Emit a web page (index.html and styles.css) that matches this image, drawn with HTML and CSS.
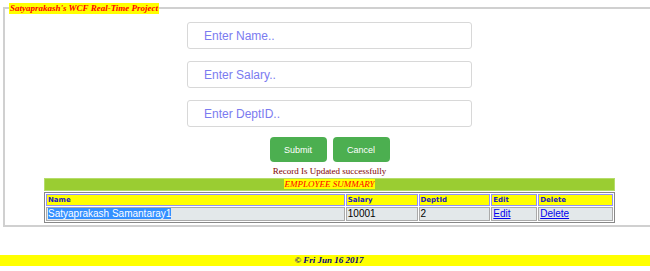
FILE: index.html
```html
<!DOCTYPE html>
<html>
<head>
<meta charset="utf-8">
<link rel="stylesheet" href="styles.css">
</head>
<body>
<div class="page">
  <fieldset class="box">
    <legend class="legend">Satyaprakash's WCF Real-Time Project</legend>
    <div class="form">
      <input class="field" type="text" placeholder="Enter Name..">
      <input class="field" type="text" placeholder="Enter Salary..">
      <input class="field" type="text" placeholder="Enter DeptID..">
      <div class="buttons">
        <button class="btn">Submit</button>
        <button class="btn">Cancel</button>
      </div>
      <div class="msg">Record Is Updated successfully</div>
    </div>
    <div class="summary">
      <div class="summary-title"><span>EMPLOYEE SUMMARY</span></div>
      <table class="grid">
        <tr class="head">
          <th class="c-name">Name</th>
          <th class="c-sal">Salary</th>
          <th class="c-dept">DeptId</th>
          <th class="c-edit">Edit</th>
          <th class="c-del">Delete</th>
        </tr>
        <tr class="row">
          <td><span class="sel">Satyaprakash Samantaray1</span></td>
          <td>10001</td>
          <td>2</td>
          <td><a href="#">Edit</a></td>
          <td><a href="#">Delete</a></td>
        </tr>
      </table>
    </div>
  </fieldset>
  <div class="footer">© Fri Jun 16 2017</div>
</div>
</body>
</html>
```
FILE: styles.css
```css
html, body {
  margin: 0;
  padding: 0;
  background: #fff;
  overflow: hidden;
}
.page {
  width: 660px;
}
.box {
  margin: 7px 0 0 3px;
  width: 652px;
  box-sizing: border-box;
  border: 1px solid #d0d0d0;
  border-width: 2px 1px 2px 2px;
  padding: 0 0 7px 0;
  height: 220px;
  position: relative;
}
.legend {
  position: absolute;
  top: -6px;
  left: 4px;
  padding: 0 1px;
  margin: 0;
  background: #ffff00;
  color: #ff0000;
  font-family: "Liberation Serif", serif;
  font-style: italic;
  font-weight: bold;
  font-size: 9px;
  line-height: 11px;
}
.form {
  display: flex;
  flex-direction: column;
  align-items: center;
  padding-top: 13px;
}
.field {
  width: 285px;
  height: 27px;
  box-sizing: border-box;
  border: 1px solid #d8d8d8;
  border-radius: 3px;
  padding: 0 0 0 16px;
  margin: 0 0 12px 0;
  font-family: "Liberation Sans", Arial, sans-serif;
  font-size: 12px;
  outline: none;
}
.field::placeholder {
  color: #7b7bf0;
}
.buttons {
  display: flex;
  gap: 6px;
  margin-top: -2px;
}
.btn {
  width: 57px;
  height: 25px;
  background: #4caf50;
  color: #fff;
  border: none;
  border-radius: 4px;
  font-family: "Liberation Sans", Arial, sans-serif;
  font-size: 9px;
  padding: 0;
}
.msg {
  margin-top: 4px;
  font-family: "Liberation Serif", serif;
  font-size: 9px;
  line-height: 11px;
  color: #800000;
}
.summary {
  margin: 1px 0 0 39px;
  width: 571px;
}
.summary-title {
  background: #9acd32;
  height: 11px;
  border: 1px solid #b5dc6a;
  text-align: center;
  font-family: "Liberation Serif", serif;
  font-style: italic;
  font-size: 9px;
  line-height: 11px;
  color: #ff0000;
}
.summary-title span {
  background: #ffff00;
}
.grid {
  width: 571px;
  border-collapse: separate;
  border-spacing: 1px;
  border: 1px solid #888;
  background: #fff;
  margin-top: 1px;
  font-family: "DejaVu Sans", Verdana, sans-serif;
}
.grid th, .grid td {
  padding: 0 1px;
  text-align: left;
}
.head th {
  background: #ffff00;
  color: #2020c0;
  font-size: 7px;
  font-weight: bold;
  height: 10px;
  line-height: 10px;
  border: 1px solid #9090ff;
}
.row td {
  background: #e3e8ea;
  font-family: "Liberation Sans", Arial, sans-serif;
  font-size: 10px;
  color: #000;
  height: 12px;
  line-height: 12px;
  border: 1px solid #aaa;
}
.row a {
  color: #0000ee;
}
.sel {
  background: #3390ff;
  color: #fff;
}
.c-name { width: 296px; }
.c-sal { width: 68px; }
.c-dept { width: 68px; }
.c-edit { width: 42px; }
.c-del { width: 71px; }
.footer {
  margin-top: 28px;
  background: #ffff00;
  width: 650px;
  height: 11px;
  text-align: center;
  font-family: "Liberation Serif", serif;
  font-style: italic;
  font-weight: bold;
  font-size: 9px;
  line-height: 11px;
  color: #000080;
  padding-left: 8px;
  box-sizing: border-box;
}
```
